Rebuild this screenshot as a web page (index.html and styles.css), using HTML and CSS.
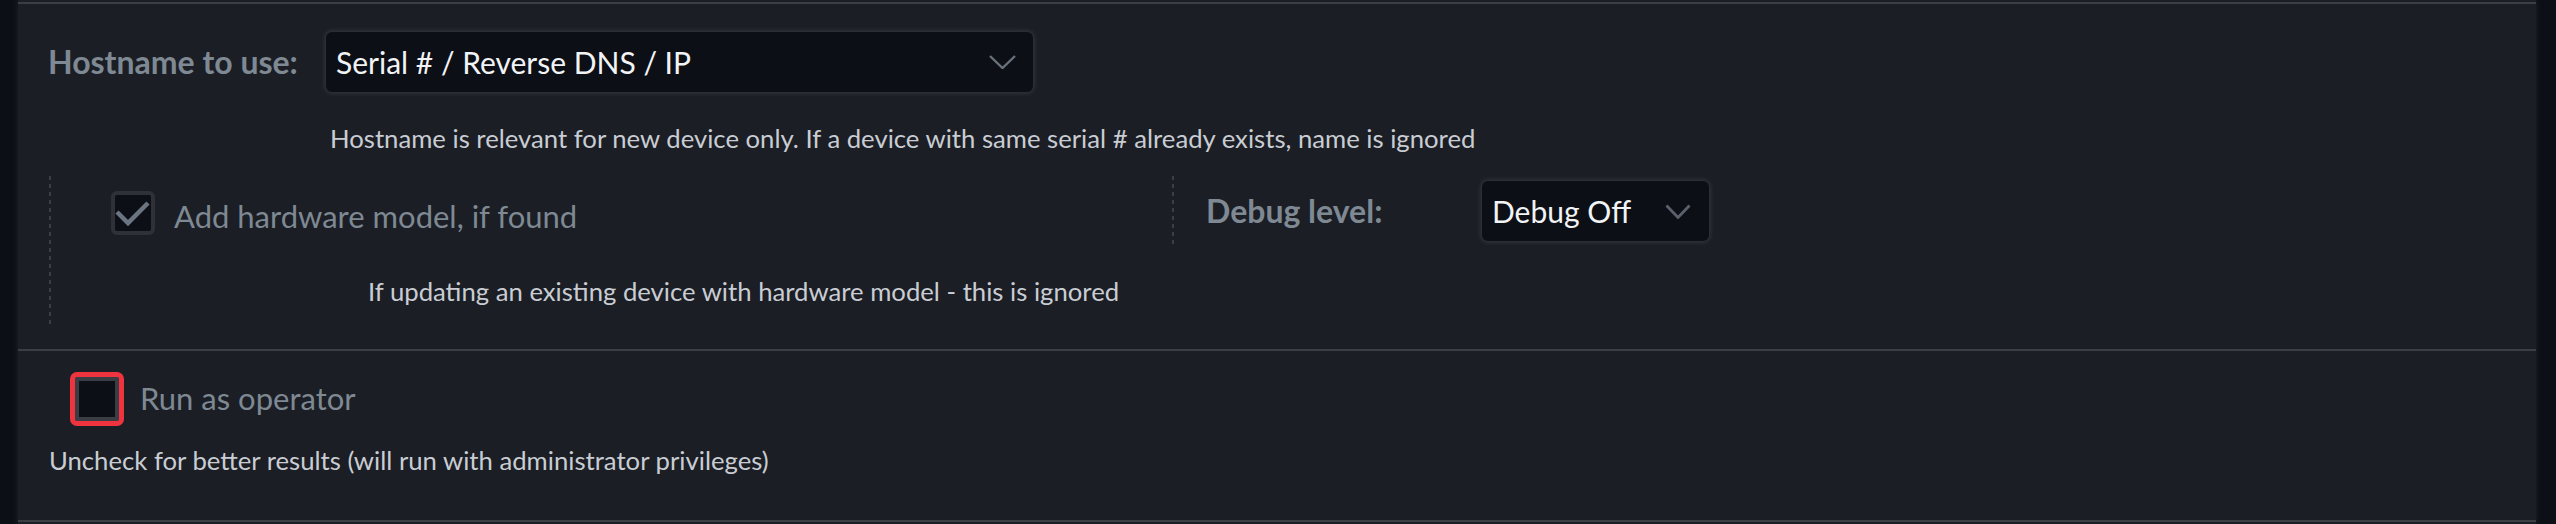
FILE: index.html
```html
<!DOCTYPE html>
<html lang="en">
<head>
<meta charset="utf-8">
<title>Settings</title>
<link rel="stylesheet" href="styles.css">
</head>
<body>
<div class="panel">
  <section class="sec sec-top">
    <div class="host-row">
      <span class="label label-bold host-label">Hostname to use:</span>
      <div class="select select-host">
        <span class="select-text">Serial # / Reverse DNS / IP</span>
        <svg class="chev chev-host" width="27" height="14" viewBox="0 0 27 14"><polyline points="1,1 13.5,13 26,1" fill="none" stroke="#68717c" stroke-width="2.4"/></svg>
      </div>
    </div>
    <p class="hint hint-host">Hostname is relevant for new device only. If a device with same serial # already exists, name is ignored</p>
    <div class="cols">
      <div class="col col-left">
        <div class="check-row">
          <span class="checkbox">
            <svg width="36" height="36" viewBox="0 0 36 36"><polyline points="2,17 13,28 33,8" fill="none" stroke="#6b7582" stroke-width="4.5"/></svg>
          </span>
          <span class="label check-label">Add hardware model, if found</span>
        </div>
        <p class="hint hint-hw">If updating an existing device with hardware model - this is ignored</p>
      </div>
      <div class="col col-right">
        <span class="label label-bold debug-label">Debug level:</span>
        <div class="select select-debug">
          <span class="select-text">Debug Off</span>
          <svg class="chev" width="26" height="15" viewBox="0 0 26 15"><polyline points="1.5,1.5 13,13.5 24.5,1.5" fill="none" stroke="#5a616c" stroke-width="2.8"/></svg>
        </div>
      </div>
    </div>
  </section>
  <section class="sec sec-bottom">
    <div class="check-row op-row">
      <span class="checkbox checkbox-alert"></span>
      <span class="label op-label">Run as operator</span>
    </div>
    <p class="hint hint-op">Uncheck for better results (will run with administrator privileges)</p>
  </section>
</div>
</body>
</html>
```

FILE: styles.css
```css
html, body {
  margin: 0;
  padding: 0;
  background: #0c0f16;
  height: 524px;
  overflow: hidden;
  font-family: Lato, "Open Sans", sans-serif;
}

.panel {
  margin: 0 20px 0 18px;
  height: 524px;
  box-sizing: border-box;
  padding-top: 2px;
  background: #1b1e25;
  box-shadow: 0 0 6px #22252b;
}

.sec {
  border-top: 2px solid #3b3e44;
  padding-left: 30px;
}

.sec-top {
  padding-top: 28px;
  padding-bottom: 22px;
}

.sec-bottom {
  padding-top: 26px;
  padding-bottom: 45px;
  border-bottom: 2px solid #3b3e44;
}

.label {
  color: #7e8993;
  font-size: 31px;
  line-height: 36px;
  white-space: nowrap;
}

.label-bold {
  font-weight: 700;
  font-size: 32px;
}

.host-row {
  display: flex;
  align-items: center;
}

.host-label {
  width: 278px;
  flex: none;
}

.select {
  display: flex;
  align-items: center;
  justify-content: space-between;
  height: 60px;
  box-sizing: border-box;
  background: #0c0f16;
  border-radius: 6px;
  box-shadow: 0 0 5px 1px rgba(200, 205, 215, 0.16);
  padding: 0 17px 0 10px;
}

.select-host {
  width: 707px;
}

.select-debug {
  width: 227px;
  padding-right: 18px;
}

.select-text {
  color: #f2f3f5;
  font-size: 30px;
  line-height: 36px;
  white-space: nowrap;
}

.chev {
  display: block;
  flex: none;
}

.hint {
  margin: 0;
  color: #c9cdd3;
  font-size: 25.7px;
  line-height: 30px;
  white-space: nowrap;
}

.hint-host {
  margin-top: 31px;
  padding-left: 282px;
}

.cols {
  display: flex;
  align-items: flex-start;
  margin-top: 23px;
}

.col {
  background-image: repeating-linear-gradient(to bottom, #3b3e44 0 4px, transparent 4px 8px);
  background-repeat: no-repeat;
  background-size: 2px 100%;
  background-position: left top;
  box-sizing: border-box;
}

.col-left {
  width: 1123px;
  padding: 15px 0 21px 62px;
  margin-left: 1px;
}

.col-right {
  display: flex;
  align-items: center;
  padding: 5px 0 5px 34px;
}

.debug-label {
  width: 276px;
}

.check-row {
  display: flex;
  align-items: center;
}

.checkbox {
  width: 44px;
  height: 44px;
  box-sizing: border-box;
  border: 4px solid #2e3137;
  border-radius: 6px;
  background: #0c0f16;
  flex: none;
  display: flex;
  align-items: center;
  justify-content: center;
}

.checkbox svg {
  display: block;
}

.check-label {
  margin-left: 19px;
  margin-top: 6px;
}

.hint-hw {
  margin-top: 41px;
  padding-left: 257px;
}

.op-row {
  margin-left: 27px;
}

.checkbox-alert {
  border-color: #3a3d43;
  border-radius: 2px;
  outline: 5px solid #f0343f;
  outline-offset: 0;
}

.op-label {
  margin-left: 21px;
  margin-top: -2px;
}

.hint-op {
  margin-top: 24px;
  padding-left: 1px;
}
```
